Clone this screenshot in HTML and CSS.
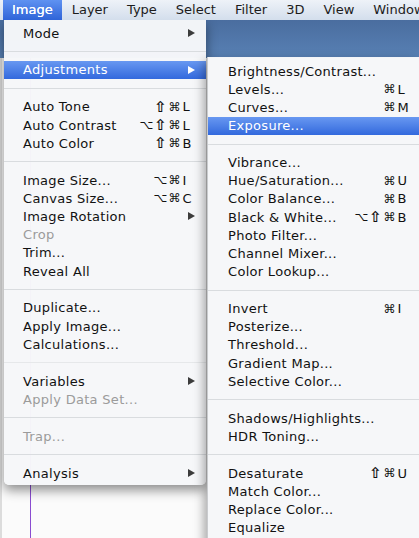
FILE: index.html
```html
<!DOCTYPE html>
<html>
<head>
<meta charset="utf-8">
<link rel="stylesheet" href="styles.css">
</head>
<body>
<div class="menubar">
  <span class="mb-item active">Image</span>
  <span class="mb-item">Layer</span>
  <span class="mb-item">Type</span>
  <span class="mb-item">Select</span>
  <span class="mb-item">Filter</span>
  <span class="mb-item">3D</span>
  <span class="mb-item">View</span>
  <span class="mb-item">Window</span>
</div>
<div class="stage">
  <div class="desk">
    <div class="band"></div>
    <div class="canvas"><div class="guide"></div></div>
  </div>

  <div class="menu main">
    <div class="row"><span class="label">Mode</span><span class="arrow"></span></div>
    <div class="sep"></div>
    <div class="row hl"><span class="label">Adjustments</span><span class="arrow"></span></div>
    <div class="sep"></div>
    <div class="row"><span class="label">Auto Tone</span><span class="sc"><span class="m sh">⇧</span><span class="m">⌘</span><span class="key">L</span></span></div>
    <div class="row"><span class="label">Auto Contrast</span><span class="sc"><span class="m">⌥</span><span class="m sh">⇧</span><span class="m">⌘</span><span class="key">L</span></span></div>
    <div class="row"><span class="label">Auto Color</span><span class="sc"><span class="m sh">⇧</span><span class="m">⌘</span><span class="key">B</span></span></div>
    <div class="sep"></div>
    <div class="row"><span class="label">Image Size...</span><span class="sc"><span class="m">⌥</span><span class="m">⌘</span><span class="key">I</span></span></div>
    <div class="row"><span class="label">Canvas Size...</span><span class="sc"><span class="m">⌥</span><span class="m">⌘</span><span class="key">C</span></span></div>
    <div class="row"><span class="label">Image Rotation</span><span class="arrow"></span></div>
    <div class="row dis"><span class="label">Crop</span></div>
    <div class="row"><span class="label">Trim...</span></div>
    <div class="row"><span class="label">Reveal All</span></div>
    <div class="sep"></div>
    <div class="row"><span class="label">Duplicate...</span></div>
    <div class="row"><span class="label">Apply Image...</span></div>
    <div class="row"><span class="label">Calculations...</span></div>
    <div class="sep faint"></div>
    <div class="row"><span class="label">Variables</span><span class="arrow"></span></div>
    <div class="row dis"><span class="label">Apply Data Set...</span></div>
    <div class="sep"></div>
    <div class="row dis"><span class="label">Trap...</span></div>
    <div class="sep"></div>
    <div class="row"><span class="label">Analysis</span><span class="arrow"></span></div>
  </div>

  <div class="menu sub">
    <div class="row"><span class="label">Brightness/Contrast...</span></div>
    <div class="row"><span class="label">Levels...</span><span class="sc"><span class="m">⌘</span><span class="key">L</span></span></div>
    <div class="row"><span class="label">Curves...</span><span class="sc"><span class="m">⌘</span><span class="key">M</span></span></div>
    <div class="row hl"><span class="label">Exposure...</span></div>
    <div class="sep"></div>
    <div class="row"><span class="label">Vibrance...</span></div>
    <div class="row"><span class="label">Hue/Saturation...</span><span class="sc"><span class="m">⌘</span><span class="key">U</span></span></div>
    <div class="row"><span class="label">Color Balance...</span><span class="sc"><span class="m">⌘</span><span class="key">B</span></span></div>
    <div class="row"><span class="label">Black &amp; White...</span><span class="sc"><span class="m">⌥</span><span class="m sh">⇧</span><span class="m">⌘</span><span class="key">B</span></span></div>
    <div class="row"><span class="label">Photo Filter...</span></div>
    <div class="row"><span class="label">Channel Mixer...</span></div>
    <div class="row"><span class="label">Color Lookup...</span></div>
    <div class="sep"></div>
    <div class="row"><span class="label">Invert</span><span class="sc"><span class="m">⌘</span><span class="key">I</span></span></div>
    <div class="row"><span class="label">Posterize...</span></div>
    <div class="row"><span class="label">Threshold...</span></div>
    <div class="row"><span class="label">Gradient Map...</span></div>
    <div class="row"><span class="label">Selective Color...</span></div>
    <div class="sep"></div>
    <div class="row"><span class="label">Shadows/Highlights...</span></div>
    <div class="row"><span class="label">HDR Toning...</span></div>
    <div class="sep"></div>
    <div class="row"><span class="label">Desaturate</span><span class="sc"><span class="m sh">⇧</span><span class="m">⌘</span><span class="key">U</span></span></div>
    <div class="row"><span class="label">Match Color...</span></div>
    <div class="row"><span class="label">Replace Color...</span></div>
    <div class="row"><span class="label">Equalize</span></div>
  </div>
</div>
</body>
</html>
```

FILE: styles.css
```css
html, body {
  margin: 0;
  padding: 0;
}
body {
  width: 419px;
  height: 538px;
  overflow: hidden;
  font-family: "DejaVu Sans", "Liberation Sans", sans-serif;
  font-size: 13px;
  color: #111;
  background: #f0f0f0;
}
.menubar {
  height: 20px;
  display: flex;
  align-items: center;
  padding-left: 2.5px;
  background: linear-gradient(#eef2f8, #d3deec);
  position: relative;
  z-index: 3;
  overflow: hidden;
}
.mb-item {
  height: 20px;
  line-height: 20px;
  padding: 0 9.5px;
  color: #1c1c1c;
  white-space: nowrap;
  flex-shrink: 0;
}
.mb-item.active {
  color: #fff;
  background: linear-gradient(#5f92f1, #2f64d8);
  text-shadow: 0 0 0.4px #fff;
}
.stage {
  position: relative;
  height: 518px;
}
.desk {
  height: 100%;
  display: flex;
  flex-direction: column;
}
.band {
  height: 38px;
  background: linear-gradient(#4a6d9f, #5880b4);
}
.canvas {
  flex: 1;
  background: #fbfbfb;
  border-left: 2px solid #dcdcdc;
  position: relative;
}
.guide {
  position: absolute;
  left: 28px;
  top: 0;
  bottom: 0;
  width: 1px;
  background: #8a4cd0;
}
.menu {
  position: absolute;
  background: rgba(246, 247, 249, 0.98);
  letter-spacing: 0.3px;
}
.menu.main {
  left: 4px;
  top: 0;
  width: 202px;
  padding: 4px 0 3px;
  border-radius: 0 0 5px 5px;
  box-shadow: 0 5px 12px rgba(0, 0, 0, 0.45);
  z-index: 2;
}
.menu.sub {
  left: 207px;
  top: 37px;
  width: 212px;
  height: 490px;
  padding-top: 5px;
  box-shadow: -3px 4px 10px rgba(0, 0, 0, 0.35);
  border-left: 1px solid #c9cbce;
  box-sizing: border-box;
  z-index: 2;
}
.row {
  height: 18.2px;
  display: flex;
  align-items: center;
  padding: 0 11px 0 19px;
  white-space: nowrap;
}
.sub .row {
  padding: 0 9px 0 20px;
}
.label {
  flex: 1;
}
.row.dis {
  color: #9b9b9b;
}
.row.hl {
  background: linear-gradient(#6898f1, #3369dd);
  color: #fff;
}
.sep {
  height: 18.7px;
  display: flex;
  align-items: center;
}
.sep::before {
  content: "";
  flex: 1;
  height: 1px;
  background: #d9dcdf;
}
.sep.faint::before {
  background: #e6e8ea;
}
.arrow {
  width: 0;
  height: 0;
  border-top: 4.5px solid transparent;
  border-bottom: 4.5px solid transparent;
  border-left: 7px solid #3c3c3c;
}
.row.hl .arrow {
  border-left-color: #fff;
}
.sc {
  display: flex;
  align-items: center;
  letter-spacing: 0;
}
.m {
  width: 14px;
  text-align: center;
  font-size: 12px;
}
.m.sh {
  font-size: 15px;
  font-weight: bold;
  line-height: 14px;
}
.key {
  width: 12.5px;
  padding-left: 1px;
  text-align: left;
}
```
